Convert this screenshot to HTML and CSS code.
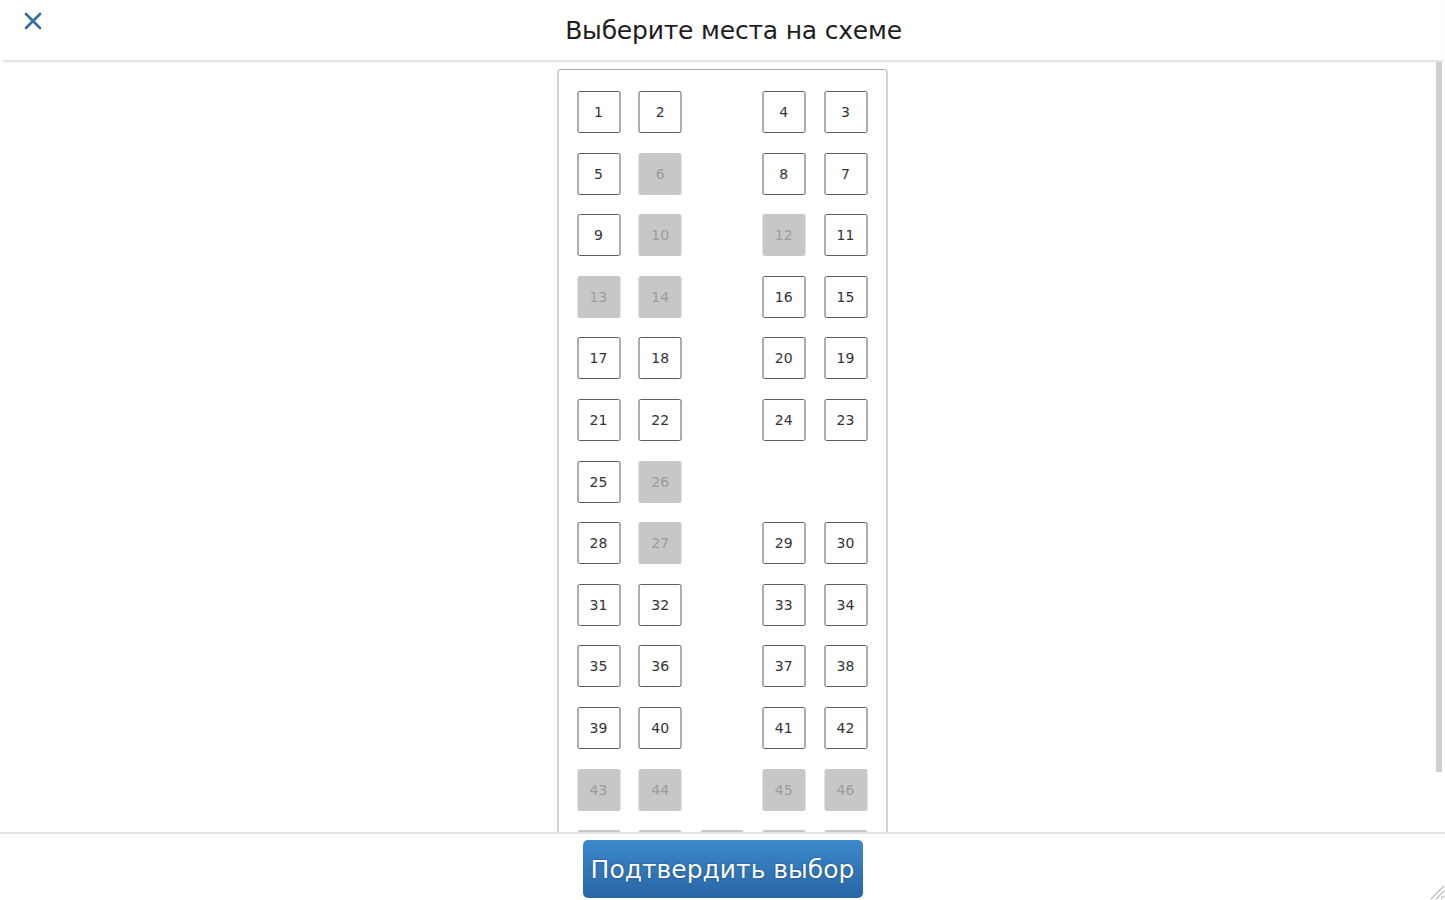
FILE: index.html
```html
<!DOCTYPE html>
<html lang="ru">

<head>
    <meta charset="UTF-8">
    <meta name="viewport" content="width=device-width, initial-scale=1.0">
    <title>Выбор мест</title>
    <link rel="stylesheet" href="styles.css">
</head>

<body>
    <div class="modal">
        <div class="modal-header">
            <button type="button" class="close-btn" aria-label="Закрыть">
                <svg width="20" height="20" viewBox="0 0 20 20">
                    <path d="M3 3 L17 17 M17 3 L3 17" stroke="#2d6ea8" stroke-width="2.6" stroke-linecap="round" fill="none"/>
                </svg>
            </button>
            <h2 class="modal-title">Выберите места на схеме</h2>
        </div>

        <div class="modal-body">
            <div class="bus">
                <div class="seat">1</div>
                <div class="seat">2</div>
                <div class="aisle"></div>
                <div class="seat">4</div>
                <div class="seat">3</div>

                <div class="seat">5</div>
                <div class="seat taken">6</div>
                <div class="aisle"></div>
                <div class="seat">8</div>
                <div class="seat">7</div>

                <div class="seat">9</div>
                <div class="seat taken">10</div>
                <div class="aisle"></div>
                <div class="seat taken">12</div>
                <div class="seat">11</div>

                <div class="seat taken">13</div>
                <div class="seat taken">14</div>
                <div class="aisle"></div>
                <div class="seat">16</div>
                <div class="seat">15</div>

                <div class="seat">17</div>
                <div class="seat">18</div>
                <div class="aisle"></div>
                <div class="seat">20</div>
                <div class="seat">19</div>

                <div class="seat">21</div>
                <div class="seat">22</div>
                <div class="aisle"></div>
                <div class="seat">24</div>
                <div class="seat">23</div>

                <div class="seat">25</div>
                <div class="seat taken">26</div>
                <div class="aisle"></div>
                <div class="aisle"></div>
                <div class="aisle"></div>

                <div class="seat">28</div>
                <div class="seat taken">27</div>
                <div class="aisle"></div>
                <div class="seat">29</div>
                <div class="seat">30</div>

                <div class="seat">31</div>
                <div class="seat">32</div>
                <div class="aisle"></div>
                <div class="seat">33</div>
                <div class="seat">34</div>

                <div class="seat">35</div>
                <div class="seat">36</div>
                <div class="aisle"></div>
                <div class="seat">37</div>
                <div class="seat">38</div>

                <div class="seat">39</div>
                <div class="seat">40</div>
                <div class="aisle"></div>
                <div class="seat">41</div>
                <div class="seat">42</div>

                <div class="seat taken">43</div>
                <div class="seat taken">44</div>
                <div class="aisle"></div>
                <div class="seat taken">45</div>
                <div class="seat taken">46</div>

                <!-- last row is under the footer, only its top edge shows -->
                <div class="seat taken"></div>
                <div class="seat taken"></div>
                <div class="seat taken"></div>
                <div class="seat taken"></div>
                <div class="seat taken"></div>
            </div>

            <div class="scroll-thumb"></div>
        </div>

        <div class="modal-footer">
            <button type="button" class="confirm-btn">Подтвердить выбор</button>
            <svg class="resize-grip" width="20" height="20" viewBox="0 0 20 20">
                <path d="M19 6 L6 19 M19 11 L11 19 M19 16 L16 19" stroke="#c4c4c4" stroke-width="1.5" fill="none"/>
            </svg>
        </div>
    </div>
</body>

</html>
```

FILE: styles.css
```css
body {
    font-family: "DejaVu Sans", Verdana, sans-serif;
    margin: 0;
    padding: 0;
    background-color: #fff;
    overflow: hidden;
}

.modal {
    display: flex;
    flex-direction: column;
    height: 900px;
    width: 1445px;
}

.modal-header {
    display: flex;
    align-items: center;
    height: 60px;
    border-bottom: 2px solid #e6e6e6;
    box-shadow: 0 1px 2px rgba(0, 0, 0, 0.04);
    margin-left: 3px;
    margin-right: 2px;
}

.close-btn {
    width: 20px;
    height: 20px;
    margin: -19px 0 0 20px;
    padding: 0;
    border: none;
    background: none;
    cursor: pointer;
    display: flex;
}

.modal-title {
    flex: 1;
    margin: 0 19px 0 0;
    text-align: center;
    font-size: 25px;
    font-weight: normal;
    color: #1e1e1e;
    letter-spacing: -0.2px;
}

.modal-body {
    flex: 1;
    position: relative;
    overflow: hidden;
}

.bus {
    width: 330px;
    box-sizing: border-box;
    margin: 7px auto 0;
    padding: 21px 19px;
    border: 1.5px solid #a8a8a8;
    border-radius: 3px;
    display: grid;
    grid-template-columns: repeat(5, 43px);
    column-gap: 18.75px;
    row-gap: 19.6px;
    transform: translateX(-0.5px);
}

.seat,
.aisle {
    height: 42px;
}

.seat {
    box-sizing: border-box;
    display: flex;
    align-items: center;
    justify-content: center;
    border: 1.5px solid #5c5c5c;
    border-radius: 2px;
    background: #fff;
    color: #333;
    font-size: 14px;
    cursor: pointer;
}

.seat.taken {
    background: #c7c7c7;
    border-color: #c7c7c7;
    color: #9c9c9c;
    cursor: default;
}

.scroll-thumb {
    position: absolute;
    top: 0;
    right: 3px;
    width: 6px;
    height: 710px;
    background: #cfcfcf;
}

.modal-footer {
    position: relative;
    height: 66px;
    border-top: 2px solid #e6e6e6;
    display: flex;
    justify-content: center;
    align-items: flex-start;
}

.confirm-btn {
    margin-top: 6px;
    width: 280px;
    height: 58px;
    border: none;
    border-radius: 5px;
    background: linear-gradient(#3b88cb, #2866a6);
    color: #fff;
    font-family: "DejaVu Sans", Verdana, sans-serif;
    font-size: 25px;
    text-shadow: 0 0 2px rgba(0, 0, 0, 0.45);
    cursor: pointer;
}

.resize-grip {
    position: absolute;
    right: 0;
    bottom: 0;
}
```
